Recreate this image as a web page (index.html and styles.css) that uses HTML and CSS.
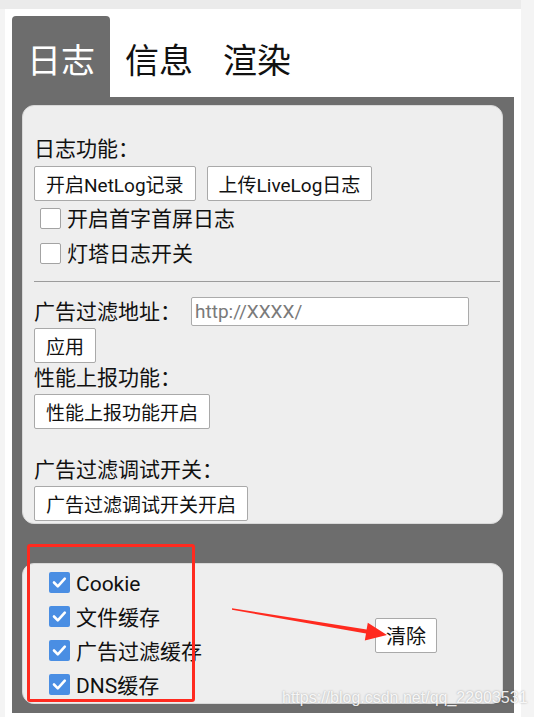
FILE: index.html
```html
<!DOCTYPE html>
<html lang="zh-CN">
<head>
    <meta charset="UTF-8">
    <meta name="viewport" content="width=device-width, initial-scale=1.0">
    <title>调试设置</title>
    <link rel="stylesheet" href="styles.css">
</head>
<body>
    <div class="screen">
        <div class="topbar"></div>

        <div class="page">
            <!-- 标签栏 -->
            <div class="tabs">
                <div class="tab active">日志</div>
                <div class="tab">信息</div>
                <div class="tab">渲染</div>
            </div>

            <div class="panel">
                <!-- 日志设置 -->
                <div class="card settings">
                    <div class="label">日志功能：</div>
                    <div class="btn-row">
                        <button class="btn">开启NetLog记录</button>
                        <button class="btn">上传LiveLog日志</button>
                    </div>
                    <div class="check"><span class="box"></span><span>开启首字首屏日志</span></div>
                    <div class="check"><span class="box"></span><span>灯塔日志开关</span></div>

                    <div class="divider"></div>

                    <div class="field">
                        <span class="label">广告过滤地址：</span>
                        <input class="text-input" type="text" placeholder="http://XXXX/">
                    </div>
                    <button class="btn apply">应用</button>

                    <div class="label perf">性能上报功能：</div>
                    <button class="btn under">性能上报功能开启</button>

                    <div class="label debug">广告过滤调试开关：</div>
                    <button class="btn under">广告过滤调试开关开启</button>
                </div>

                <!-- 缓存清除 -->
                <div class="card clear">
                    <div class="check-list">
                        <div class="check big"><span class="box on"><svg viewBox="0 0 21 21"><path d="M5 10.5l3.8 3.8 7-7.6"/></svg></span><span>Cookie</span></div>
                        <div class="check big"><span class="box on"><svg viewBox="0 0 21 21"><path d="M5 10.5l3.8 3.8 7-7.6"/></svg></span><span>文件缓存</span></div>
                        <div class="check big"><span class="box on"><svg viewBox="0 0 21 21"><path d="M5 10.5l3.8 3.8 7-7.6"/></svg></span><span>广告过滤缓存</span></div>
                        <div class="check big"><span class="box on"><svg viewBox="0 0 21 21"><path d="M5 10.5l3.8 3.8 7-7.6"/></svg></span><span>DNS缓存</span></div>
                    </div>
                    <button class="btn clear-btn">清除</button>
                </div>
            </div>
        </div>

        <!-- 标注 -->
        <div class="mark-box"></div>
        <svg class="mark-arrow" viewBox="220 600 180 50">
            <polygon points="232,608.2 366.6,629.4 367.8,622.7 387,635 364.8,640.5 366,633.6 232,609.8"/>
        </svg>
        <div class="watermark">https://blog.csdn.net/qq_22903531</div>
    </div>
</body>
</html>
```

FILE: styles.css
```css
:root {
    --panel-bg: #6d6d6d;
    --card-bg: #eeeeee;
    --check-blue: #4a8ee3;
    --mark-red: #ff2a1f;
}

body {
    margin: 0;
    background: #f4f4f4;
    font-family: Roboto, "Noto Sans CJK SC", sans-serif;
    color: #111;
}

.screen {
    position: relative;
    width: 534px;
    height: 717px;
    overflow: hidden;
}

.topbar {
    width: 521px;
    height: 9px;
    background: #ebebeb;
}

.page {
    margin-left: 5px;
    width: 516px;
    height: 708px;
    box-sizing: border-box;
    padding: 7px 7px 0 7px;
    background: white;
}

.tabs {
    display: flex;
    height: 81px;
}

.tab {
    display: flex;
    align-items: center;
    box-sizing: border-box;
    padding: 8px 15px 0;
    font-size: 34px;
    line-height: 1;
    color: #111;
}

.tab.active {
    background: var(--panel-bg);
    color: white;
    border-radius: 4px 4px 0 0;
}

.panel {
    background: var(--panel-bg);
    padding: 8px 11px 9px 10px;
}

.card {
    background: var(--card-bg);
    border: 1px solid #d8d8d8;
    border-radius: 12px;
}

.settings {
    display: flex;
    flex-direction: column;
    align-items: flex-start;
    height: 419px;
    box-sizing: border-box;
    padding: 30px 2px 2px 11px;
}

.label {
    font-size: 21px;
    line-height: 26px;
}

.btn {
    height: 35px;
    padding: 0 11px;
    background: white;
    border: 1px solid #a9a9a9;
    border-radius: 2px;
    font-family: Roboto, "Noto Sans CJK SC", sans-serif;
    font-size: 19px;
    color: #111;
}

.btn-row {
    display: flex;
    gap: 11px;
    margin-top: 4px;
}

.check {
    display: flex;
    align-items: center;
    gap: 6px;
    height: 35px;
    padding-left: 6px;
    font-size: 21px;
    line-height: 24px;
}

.check span:last-child {
    display: block;
    height: 24px;
}

.box {
    flex: none;
    width: 21px;
    height: 21px;
    box-sizing: border-box;
    background: white;
    border: 1px solid #a3a3a3;
    border-radius: 2px;
}

.box.on {
    background: var(--check-blue);
    border: none;
}

.box svg {
    display: block;
    width: 21px;
    height: 21px;
}

.box svg path {
    fill: none;
    stroke: white;
    stroke-width: 2.6;
    stroke-linecap: round;
    stroke-linejoin: round;
}

.divider {
    align-self: stretch;
    height: 1px;
    margin-top: 10px;
    background: #9c9c9c;
}

.field {
    display: flex;
    align-items: center;
    gap: 10px;
    height: 29px;
    margin-top: 15px;
}

.text-input {
    width: 278px;
    height: 29px;
    box-sizing: border-box;
    padding: 0 3px;
    background: white;
    border: 1px solid #ababab;
    border-radius: 2px;
    font-family: Roboto, "Noto Sans CJK SC", sans-serif;
    font-size: 19px;
}

.text-input::placeholder {
    color: #7a7a7a;
}

.apply { margin-top: 2px; }
.perf { margin-top: 2px; }
.under { margin-top: 3px; }
.debug { margin-top: 28px; }

.clear {
    display: flex;
    align-items: center;
    height: 141px;
    box-sizing: border-box;
    margin-top: 39px;
    padding: 1px 0 2px 26px;
}

.check-list {
    width: 326px;
}

.check.big {
    height: 34px;
    padding-left: 0;
}

.check.big span:last-child {
    padding-top: 3px;
}

.clear-btn {
    margin-top: 4px;
    padding: 0 10px;
    font-size: 20px;
}

.mark-box {
    position: absolute;
    left: 27px;
    top: 544px;
    width: 168px;
    height: 158px;
    box-sizing: border-box;
    border: 3px solid var(--mark-red);
    border-radius: 3px;
}

.mark-arrow {
    position: absolute;
    left: 220px;
    top: 600px;
    width: 180px;
    height: 50px;
    fill: var(--mark-red);
}

.watermark {
    position: absolute;
    left: 282px;
    top: 688px;
    font-family: "Liberation Sans", Arial, sans-serif;
    font-size: 16px;
    line-height: 20px;
    color: rgba(255, 255, 255, 0.9);
    text-shadow: 0 0 2px rgba(60, 60, 60, 0.45);
}
```
